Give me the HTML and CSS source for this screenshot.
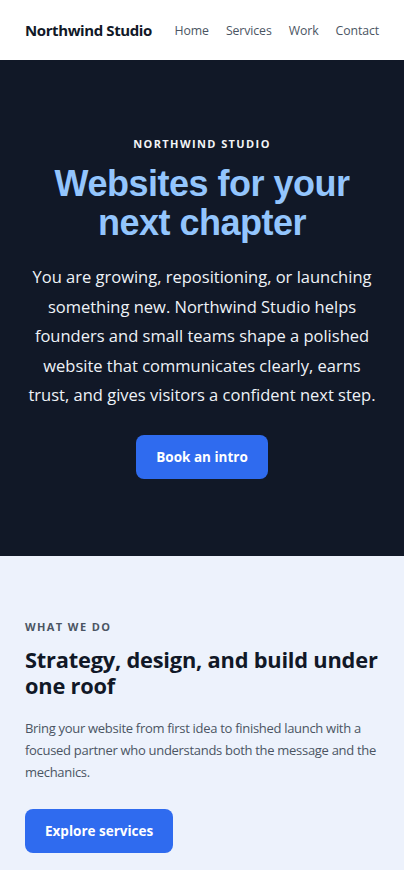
FILE: index.html
```html
<!DOCTYPE html>
<html lang="en">
<head>
<meta charset="utf-8">
<meta name="viewport" content="width=device-width, initial-scale=1">
<title>Northwind Studio</title>
<link rel="stylesheet" href="styles.css">
</head>
<body>
<header class="site-header">
  <a class="brand" href="#">Northwind Studio</a>
  <nav class="nav">
    <a href="#">Home</a>
    <a href="#">Services</a>
    <a href="#">Work</a>
    <a href="#">Contact</a>
  </nav>
</header>
<main>
  <section class="hero">
    <p class="eyebrow">NORTHWIND STUDIO</p>
    <h1 class="hero-title">Websites for your next chapter</h1>
    <p class="hero-text">You are growing, repositioning, or launching something new. Northwind Studio helps founders and small teams shape a polished website that communicates clearly, earns trust, and gives visitors a confident next step.</p>
    <a class="btn" href="#">Book an intro</a>
  </section>
  <section class="services">
    <p class="label">WHAT WE DO</p>
    <h2 class="services-title">Strategy, design, and build under one roof</h2>
    <p class="services-text">Bring your website from first idea to finished launch with a focused partner who understands both the message and the mechanics.</p>
    <a class="btn" href="#">Explore services</a>
  </section>
</main>
</body>
</html>
```

FILE: styles.css
```css
* { box-sizing: border-box; }
html, body { margin: 0; padding: 0; }
body {
  font-family: "Open Sans", "Noto Sans", sans-serif;
  background: #edf2fc;
  color: #111827;
}
a { text-decoration: none; }

.site-header {
  height: 60px;
  background: #ffffff;
  display: flex;
  align-items: center;
  justify-content: space-between;
  padding: 0 25px;
}
.brand {
  font-size: 15px;
  font-weight: 700;
  letter-spacing: -0.4px;
  white-space: nowrap;
  color: #111827;
}
.nav {
  display: flex;
  gap: 17px;
}
.nav a {
  font-size: 12.3px;
  font-weight: 500;
  letter-spacing: -0.1px;
  color: #4b5563;
}

.hero {
  background: #111827;
  padding: 76px 24px 77px;
  display: flex;
  flex-direction: column;
  align-items: center;
  text-align: center;
}
.eyebrow {
  margin: 0;
  font-size: 11px;
  font-weight: 700;
  letter-spacing: 1.4px;
  color: #f3f4f6;
  line-height: 16px;
}
.hero-title {
  margin: 12px 0 0;
  font-family: "Liberation Sans", Arial, sans-serif;
  font-size: 36px;
  line-height: 39px;
  font-weight: 700;
  color: #93c5fd;
  letter-spacing: -0.5px;
  max-width: 300px;
}
.hero-text {
  margin: 20px 0 0;
  font-size: 16.5px;
  line-height: 29.6px;
  color: #eef2f7;
}
.btn {
  display: inline-flex;
  align-items: center;
  justify-content: center;
  height: 44px;
  padding: 0 20px;
  background: #2f6bef;
  color: #ffffff;
  font-size: 13.5px;
  font-weight: 700;
  border-radius: 8px;
}
.hero .btn {
  margin-top: 25px;
}

.services {
  padding: 63px 25px 17px;
  display: flex;
  flex-direction: column;
  align-items: flex-start;
}
.label {
  margin: 0;
  font-size: 11px;
  font-weight: 700;
  letter-spacing: 1.4px;
  color: #4b5563;
  line-height: 16px;
}
.services-title {
  margin: 12px 0 0;
  font-size: 21.8px;
  line-height: 26px;
  font-weight: 700;
  color: #111827;
  letter-spacing: -0.2px;
}
.services-text {
  margin: 18px 0 0;
  font-size: 13px;
  letter-spacing: -0.3px;
  line-height: 22px;
  color: #4b5563;
}
.services .btn {
  margin-top: 26px;
}
```
